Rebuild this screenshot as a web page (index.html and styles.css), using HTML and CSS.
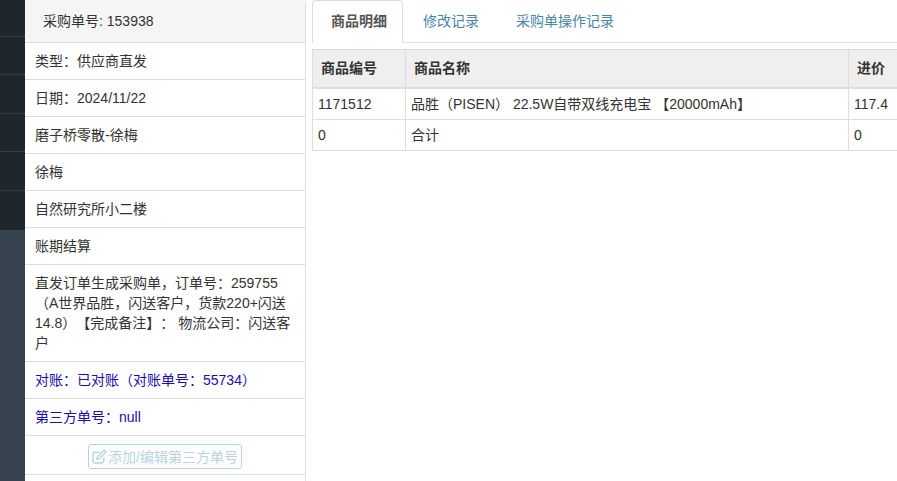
FILE: index.html
```html
<!DOCTYPE html>
<html lang="zh-CN">
<head>
<meta charset="utf-8">
<title>采购单</title>
<link rel="stylesheet" href="styles.css">
</head>
<body>
<div class="page">
  <aside class="nav">
    <div class="nav-dark">
      <div class="nav-item first"></div>
      <div class="nav-item"></div>
      <div class="nav-item"></div>
      <div class="nav-item"></div>
      <div class="nav-item"></div>
    </div>
  </aside>
  <section class="panel">
    <div class="panel-heading">采购单号: 153938</div>
    <ul class="list">
      <li class="row">类型：供应商直发</li>
      <li class="row">日期：2024/11/22</li>
      <li class="row">磨子桥零散-徐梅</li>
      <li class="row">徐梅</li>
      <li class="row">自然研究所小二楼</li>
      <li class="row">账期结算</li>
      <li class="row">直发订单生成采购单，订单号：259755（A世界品胜，闪送客户，货款220+闪送14.8）【完成备注】： 物流公司：闪送客户</li>
      <li class="row blue">对账：已对账（对账单号：55734）</li>
      <li class="row blue">第三方单号：null</li>
      <li class="row center"><button class="btn" type="button"><svg class="icon" viewBox="0 0 14 14" width="15" height="15"><path d="M11 8v3.2A1.8 1.8 0 0 1 9.2 13H2.8A1.8 1.8 0 0 1 1 11.200V4.800A1.800 1.800 0 0 1 2.800 3H7" fill="none" stroke="currentColor" stroke-width="1.300"/><path d="M4.500 9.500l.5-2.300L11.300.9l1.800 1.800L6.800 9z" fill="none" stroke="currentColor" stroke-width="1.200"/></svg>添加/编辑第三方单号</button></li>
    </ul>
  </section>
  <main class="main">
    <nav class="tabs">
      <a class="tab active">商品明细</a>
      <a class="tab">修改记录</a>
      <a class="tab">采购单操作记录</a>
    </nav>
    <table class="table">
      <thead>
        <tr><th class="c1">商品编号</th><th class="c2">商品名称</th><th class="c3">进价</th></tr>
      </thead>
      <tbody>
        <tr><td>1171512</td><td>品胜（PISEN） 22.5W自带双线充电宝 【20000mAh】</td><td>117.4</td></tr>
        <tr><td>0</td><td>合计</td><td>0</td></tr>
      </tbody>
    </table>
  </main>
</div>
</body>
</html>
```
FILE: styles.css
```css
* { box-sizing: border-box; }
html, body { margin: 0; height: 100%; overflow: hidden; background: #fff; }
body {
  font-family: "Liberation Sans", "Noto Sans CJK SC", sans-serif;
  font-size: 14px;
  line-height: 20px;
  color: #333;
  text-spacing-trim: space-all;
}
.page { display: flex; height: 481px; width: 897px; overflow: hidden; }
.nav { flex: 0 0 25px; background: #37444f; }
.nav-dark { height: 230px; background: #1f262d; }
.nav-item { height: 38.400px; border-bottom: 1px dotted #4a545d; }
.nav-item.first { height: 37px; }
.panel {
  flex: 0 0 281px;
  height: 481px;
  border-right: 1px solid #ddd;
  border-top-right-radius: 4px;
}
.panel-heading {
  height: 43px;
  padding: 11px 18px 0;
  background: #f5f5f5;
  border-bottom: 1px solid #ddd;
}
.list { list-style: none; margin: 0; padding: 0; }
.row { padding: 8px 10px; border-bottom: 1px solid #ddd; }
.blue { color: #1a0dab; }
.center { text-align: center; padding-bottom: 6px; height: 39px; }
.btn {
  display: inline-flex;
  align-items: center;
  height: 25px;
  padding: 0 3px;
  font: inherit;
  color: #6fa9bf;
  background: #fff;
  border: 1px solid #6fa9bf;
  border-radius: 3px;
  opacity: .5;
}
.icon { flex: none; margin-right: 1px; }
.main { flex: 1; min-width: 0; padding-left: 6px; overflow: hidden; }
.tabs { display: flex; height: 43px; border-bottom: 1px solid #ddd; }
.tab {
  height: 43px;
  padding: 10px 20px 0 18px;
  color: #4a84a8;
  border: 1px solid transparent;
  white-space: nowrap;
}
.tab.active {
  width: 91px;
  color: #555;
  font-weight: bold;
  background: #fff;
  border-color: #ddd #ddd #fff;
  border-radius: 4px 4px 0 0;
}
.tab:nth-child(2) { padding-left: 19px; padding-right: 17px; }
.table {
  table-layout: fixed;
  width: 600px;
  margin-top: 6px;
  border-collapse: collapse;
}
.c1 { width: 93px; }
.c2 { width: 443px; }
.c3 { width: 64px; }
th, td { border: 1px solid #ddd; text-align: left; padding: 5px; }
th { height: 38px; padding: 8px; background: #efefef; border-bottom-width: 2px; }
td { height: 31px; }
```
